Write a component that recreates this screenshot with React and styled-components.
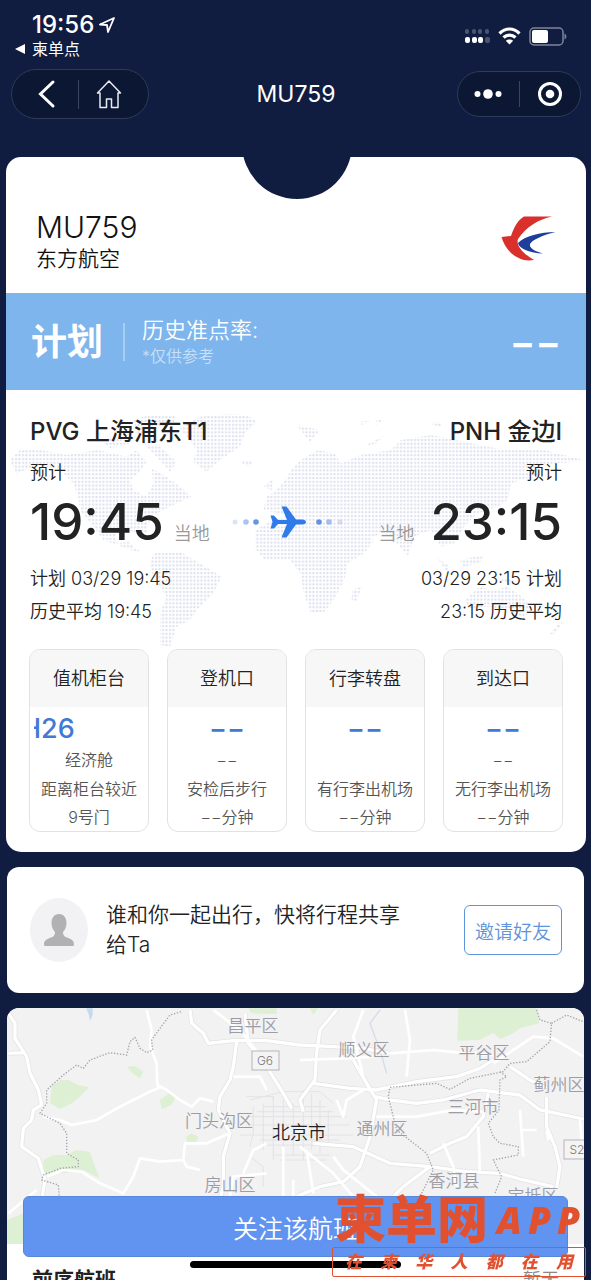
import React from 'react'
import styled, { createGlobalStyle } from 'styled-components'

const navy = '#111d40'
const blue = '#3f7ad6'

const GlobalStyle = createGlobalStyle`
  * {
    box-sizing: border-box;
  }

  body {
    margin: 0;
    background: ${navy};
    color: #222;
    font-family: Inter, "Noto Sans CJK SC", sans-serif;
    font-weight: 350;
  }

  h1, h2, h3, p {
    margin: 0;
    font-weight: inherit;
  }

  button {
    font-family: inherit;
    font-weight: inherit;
    cursor: pointer;
  }

  svg {
    display: block;
  }
`

const Screen = styled.div`
  height: 100vh;
  overflow: hidden auto;
  scrollbar-width: none;
  background: ${navy};
`

const StatusBar = styled.div`
  display: flex;
  justify-content: space-between;
  align-items: center;
  padding: 12px 24px 0 15px;
  color: #fff;
`

const Clock = styled.div`
  display: flex;
  align-items: center;
  gap: 5px;
  padding-left: 17px;
  font-size: 24px;
  font-weight: 500;
  line-height: 26px;
`

const BackToApp = styled.a`
  display: flex;
  align-items: center;
  gap: 7px;
  color: #fff;
  font-size: 16px;
  font-weight: 400;
  line-height: 22px;
  text-decoration: none;
`

const Indicators = styled.div`
  display: flex;
  align-items: center;
  gap: 8px;
`

const NavBar = styled.nav`
  display: grid;
  grid-template-columns: 1fr auto 1fr;
  align-items: center;
  padding: 9px 10px 0 11px;
  color: #fff;
`

const Title = styled.h1`
  font-size: 23px;
  font-weight: 400;
  line-height: 30px;
`

const Capsule = styled.div`
  display: flex;
  align-items: center;
  justify-self: ${props => props.$end ? 'end' : 'start'};
  width: ${props => props.$end ? '124px' : '138px'};
  height: ${props => props.$end ? '46px' : '50px'};
  padding: ${props => props.$end ? '0' : '0 8px 0 4px'};
  border: 1px solid #2f3a58;
  border-radius: 25px;
  background: #0c1733;
`

const CapsuleButton = styled.button`
  display: flex;
  flex: 1;
  align-items: center;
  justify-content: center;
  padding: 0;
  border: 0;
  background: none;

  & + & {
    border-left: 1px solid #3a4562;
  }
`

const FlightCard = styled.section`
  position: relative;
  margin: 38px 5px 0 6px;
  border-radius: 15px;
  background: #fff;
  overflow: hidden;
`

const Notch = styled.div`
  position: absolute;
  top: -68px;
  left: 50%;
  width: 110px;
  height: 110px;
  margin-left: -54px;
  border-radius: 50%;
  background: ${navy};
`

const FlightHeader = styled.header`
  display: flex;
  justify-content: space-between;
  align-items: flex-start;
  padding: 53px 30px 19px;
`

const FlightNumber = styled.h2`
  color: #111;
  font-size: 30px;
  line-height: 34px;
`

const Airline = styled.p`
  color: #111;
  font-size: 21px;
  line-height: 30px;
`

const StatusBand = styled.div`
  display: flex;
  align-items: center;
  height: 97px;
  padding: 0 25px;
  background: #7eb5ec;
  color: #fff;
`

const FlightStatus = styled.div`
  padding-right: 20px;
  font-size: 36px;
  font-weight: 700;
  line-height: 44px;
`

const Punctuality = styled.div`
  flex: 1;
  font-size: 22px;
  line-height: 28px;
`

const Divider = styled.div`
  width: 2px;
  height: 38px;
  margin-right: 17px;
  background: #a9cef3;
`

const Hint = styled.p`
  color: #c8e0f8;
  font-size: 16px;
  line-height: 24px;
`

const Rate = styled.div`
  font-size: 38px;
  font-weight: 600;
  line-height: 44px;
`

const FlightBody = styled.div`
  display: grid;

  > * {
    grid-area: 1 / 1;
    min-width: 0;
  }
`

const WorldMap = styled.svg`
  width: 100%;
  height: auto;
  padding-top: 10px;
`

const FlightDetails = styled.div`
  padding: 26px 23px 20px;
`

const Route = styled.div`
  display: flex;
  justify-content: space-between;
  align-items: center;
  padding: 0 1px;
`

const Endpoint = styled.div`
  text-align: ${props => props.$end ? 'right' : 'left'};
`

const Airport = styled.h3`
  font-size: 24px;
  font-weight: 500;
  line-height: 32px;
`

const Expected = styled.p`
  padding: 12px 0 6px;
  font-size: 18px;
  line-height: 26px;
`

const TimeRow = styled.div`
  display: flex;
  flex-direction: ${props => props.$end ? 'row-reverse' : 'row'};
  align-items: baseline;
  gap: ${props => props.$end ? '16px' : '10px'};
`

const Time = styled.span`
  font-size: 51px;
  font-weight: 500;
  line-height: 60px;
`

const Zone = styled.span`
  color: #999;
  font-size: 18px;
  line-height: 24px;
`

const Schedule = styled.div`
  padding-top: 10px;
  font-size: 18px;
  line-height: 33px;
`

const Places = styled.div`
  display: grid;
  grid-template-columns: repeat(4, 1fr);
  gap: 18px;
  padding-top: 21px;
`

const Place = styled.div`
  border: 1px solid #e2e2e2;
  border-radius: 11px;
  background: #fff;
  text-align: center;
  overflow: hidden;
`

const PlaceName = styled.h3`
  margin-bottom: 6px;
  background: #f7f7f7;
  font-size: 18px;
  line-height: 57px;
`

const PlaceValue = styled.div`
  display: flex;
  justify-content: ${props => props.$scrolling ? 'flex-start' : 'center'};
  margin: 0 4px;
  color: ${blue};
  font-size: 27px;
  font-weight: 500;
  line-height: 32px;
  overflow: hidden;
`

const Ticker = styled.span`
  margin-left: -13px;
`

const PlaceClass = styled.p`
  min-height: 30px;
  color: #555;
  font-size: 16px;
  line-height: 30px;
`

const PlaceNote = styled.p`
  color: #555;
  font-size: 16px;
  line-height: 28px;
  white-space: nowrap;
`

const ShareCard = styled.section`
  display: flex;
  align-items: center;
  height: 126px;
  margin: 15px 7px 0;
  padding: 0 22px 0 23px;
  border-radius: 12px;
  background: #fff;
`

const Avatar = styled.div`
  display: flex;
  flex: none;
  align-items: center;
  justify-content: center;
  width: 58px;
  height: 64px;
  margin-right: 18px;
  border-radius: 50%;
  background: #f2f2f5;
`

const ShareText = styled.p`
  flex: 1;
  padding-right: 52px;
  font-size: 21px;
  line-height: 30px;
`

const InviteButton = styled.button`
  flex: none;
  width: 98px;
  height: 50px;
  padding: 0;
  border: 1px solid #5f93da;
  border-radius: 6px;
  background: #fff;
  color: #5f93da;
  font-size: 19px;
`

const MapCard = styled.section`
  margin: 15px 7px 0;
  border-radius: 12px 12px 0 0;
  background: #fff;
  overflow: hidden;
`

const CityMap = styled.svg`
  width: 100%;
  height: auto;
  background: #f2f2f3;
`

const PreviousFlight = styled.div`
  display: flex;
  justify-content: space-between;
  padding: 21px 25px;
  font-size: 21px;
  line-height: 30px;
`

const PreviousTitle = styled.h3`
  font-size: 21px;
  font-weight: 700;
`

const PreviousValue = styled.span`
  color: #888;
  font-size: 18px;
`

const Dock = styled.div`
  position: fixed;
  right: 23px;
  bottom: 12px;
  left: 23px;
  display: flex;
  flex-direction: column;
  align-items: center;
  gap: 4px;
`

const FollowButton = styled.button`
  width: 100%;
  height: 61px;
  border: 1px solid #5787d8;
  border-radius: 6px;
  background: #6194f0;
  color: #fff;
  font-size: 25px;
`

const HomeIndicator = styled.div`
  width: 211px;
  height: 7px;
  border-radius: 4px;
  background: #000;
`

const Watermark = styled.div`
  position: fixed;
  right: 5px;
  bottom: 3px;
  width: 254px;
  color: #e2512f;
`

const Brand = styled.div`
  display: flex;
  align-items: center;
  justify-content: space-between;
  padding: 0 6px 0 3px;
  font-size: 51px;
  font-weight: 900;
  line-height: 54px;
`

const BrandSuffix = styled.span`
  display: flex;
  gap: 6px;
  font-family: "Open Sans", sans-serif;
  font-size: 37px;
  font-style: italic;
  font-weight: 800;
`

const Slogan = styled.div`
  display: flex;
  justify-content: space-between;
  padding: 0 12px;
  border: 1px solid #e2512f;
  border-radius: 2px;
  font-size: 17px;
  font-style: italic;
  font-weight: 900;
  line-height: 28px;
`

const places = [
  { name: '值机柜台', value: 'H26', scrolling: true, cabin: '经济舱', note: '距离柜台较近', detail: '9号门' },
  { name: '登机口', value: '−−', cabin: '−−', note: '安检后步行', detail: '−−分钟' },
  { name: '行李转盘', value: '−−', cabin: '', note: '有行李出机场', detail: '−−分钟' },
  { name: '到达口', value: '−−', cabin: '−−', note: '无行李出机场', detail: '−−分钟' }
]

const districts = [
  { name: '昌平区', x: 246, y: 24 },
  { name: '顺义区', x: 357, y: 48 },
  { name: '平谷区', x: 477, y: 51 },
  { name: '蓟州区', x: 552, y: 83 },
  { name: '三河市', x: 466, y: 105 },
  { name: '门头沟区', x: 212, y: 119 },
  { name: '通州区', x: 375, y: 127 },
  { name: '房山区', x: 223, y: 183 },
  { name: '香河县', x: 447, y: 179 },
  { name: '宝坻区', x: 526, y: 194 }
]

const continents = [
  // North America and its arctic islands
  'M30 180 60 150 110 148 200 165 290 150 380 170 410 150 440 185 420 215 390 240 400 270 440 290 460 250 455 205 500 230 540 260 575 290 530 310 490 330 460 345 440 380 440 400 400 395 345 390 350 430 385 425 425 460 380 445 310 420 280 380 240 330 235 290 220 250 180 210 110 195 50 222z',
  'M400 60 450 45 530 45 520 70 460 90 470 120 410 100zM300 120 350 110 390 130 330 145zM430 130 480 140 530 185 510 215 470 170z',
  // Greenland, Iceland
  'M540 85 600 50 680 42 740 45 770 65 735 100 720 140 660 180 620 215 580 185 590 150z',
  'M725 180 760 180 750 200 730 195z',
  // South America
  'M460 460 540 455 600 490 665 530 640 580 600 620 570 660 530 680 510 740 480 735 480 640 500 590 460 530 450 490z',
  // Eurasia
  'M873 210 903 180 953 150 1003 160 1023 190 1083 165 1173 150 1203 120 1293 105 1393 125 1513 150 1633 150 1758 182 1673 190 1613 200 1613 225 1533 250 1523 300 1493 320 1433 340 1393 380 1363 430 1323 440 1293 390 1243 410 1223 470 1183 420 1143 400 1093 425 1043 420 973 360 900 345 860 345 790 330 800 290 830 270 860 235z',
  // Africa
  'M765 390 800 370 873 340 960 360 1023 385 1060 400 1123 420 1093 460 1043 490 1033 540 1008 590 973 635 933 640 913 585 900 520 870 480 795 480 765 445z',
  'M790 260 820 235 815 270zM1058 570 1085 560 1070 605 1055 600z',
  // Oceania
  'M1395 600 1440 560 1480 572 1520 560 1560 585 1600 625 1570 655 1530 630 1470 620 1405 625z',
  'M1310 470 1350 500 1340 515zM1380 480 1450 465 1440 490 1390 500zM1480 530 1540 540 1530 555zM1650 700 1680 665 1690 670 1660 705z',
  'M890 75 960 90 930 125zM1080 65 1110 62 1085 75zM1130 60 1150 58 1130 75zM1090 140 1150 108 1130 130zM1290 70 1330 65 1320 82z'
]

const thickRoads = [
  'M25 40 45 70 45 115 80 170 90 220 115 270 125 315 100 330 95 360 70 385 65 440 115 475 135 540 125 600',
  'M25 160 75 158M570 30 575 70 610 100 625 130 700 122 800 122 900 135 1000 140 1090 145 1170 160M710 125 700 200 690 240 660 290 655 330 690 400 670 470 670 560 660 600',
  'M735 40 745 130 800 200 850 280 875 325M1010 30 960 90 950 160 945 240 900 300 910 335',
  'M940 250 1050 265 1130 270 1250 245 1370 230 1440 205 1480 180M1125 290 1170 300 1250 310 1330 300 1440 270 1560 285 1620 330 1755 358',
  'M1060 180 1100 250 1130 300 1110 410 1080 500 1030 545 960 560 890 590M940 430 1060 440 1170 490 1290 500 1400 515 1500 520 1570 540 1660 560M1290 500 1210 560 1180 590',
  'M1640 290 1640 380 1665 440 1680 500 1670 565M1290 460 1350 430 1400 410 1450 350 1465 280M1640 390 1645 420M1530 200 1590 240 1640 265'
]

const thinRoads = [
  'M440 30 455 90 450 140 470 190 472 255 500 270 540 300 575 320 600 295 640 305M130 350 180 360 215 375 290 360 360 320 400 300 450 275 480 262',
  'M245 515 300 550 370 580 400 530 420 475 480 485 550 480 560 500 600 510M550 480 555 430 620 430 690 400M245 515 190 510 140 530M25 640 110 570',
  'M640 30 720 90 790 180M1090 30 1060 110 1090 230M1215 30 1230 120 1220 230M1170 160 1300 150 1400 160 1480 165M1480 190 1600 110 1660 115 1750 170',
  'M1130 350 1250 350 1360 330 1450 335M1330 430 1360 500 1370 560M1435 380 1440 520M1560 330 1570 470M1560 390 1610 390M1740 360 1745 420M900 180 1040 175 1120 170M700 230 780 230 800 270',
  'M730 520 760 450 800 430M850 440 850 590M800 520 700 530 690 590M900 440 1000 520 1060 590M1000 470 1030 510 1130 590M880 540 880 590M920 450 940 580M1010 300 1030 350 1040 300 1090 270'
]

const streets = [
  'M750 300 850 275 960 275 1000 310M760 320 760 400 750 440M790 310 790 450M820 290 820 480M850 300 850 470M880 310 880 470M910 270 910 480M935 280 935 450M960 300 960 460M985 330 985 440',
  'M740 350 1040 350M750 375 1050 375M720 405 1060 405M770 335 1000 335M790 320 980 320M780 420 1020 420M800 435 1000 435M820 465 990 465M740 290 820 290 820 300M750 470 790 500 790 560M840 480 980 480'
]

const borders = [
  'M543 35 510 45 480 85 455 120 458 150 440 158 420 145 405 112 390 125 380 165 330 158 270 180 250 205 230 195 190 225 140 270 140 310 120 340 180 370 200 400 200 460 235 480 235 500 180 505 130 525 125 540 175 555 178 590',
  'M1610 30 1620 60 1655 70 1650 125 1580 185 1530 190 1510 215 1410 235 1350 268 1310 250 1170 262 1165 290 1180 350 1190 390 1280 460 1300 510 1265 580',
  'M1655 70 1700 45 1750 65M1500 215 1520 230 1500 240 1497 330 1465 370 1480 410 1500 430 1555 440 1555 465 1480 480 1505 530 1485 580'
]

const LocationArrow = () => (
  <svg width="16" height="16" viewBox="0 0 16 16" fill="none" stroke="#fff" strokeWidth="1.8" strokeLinejoin="round">
    <path d="M15 1 1 7.500l7 .5 1 7z" />
  </svg>
)

const SignalIcon = () => (
  <svg width="25" height="14" viewBox="0 0 25 14" fill="#fff">
    {[0, 7, 13, 20].map(x =>
      <rect key={x} x={x} y="0" width="4" height="5" rx="2" opacity="0.25" />
    )}
    {[0, 7, 13, 20].map(x =>
      <rect key={x} x={x} y="8" width="5" height="6" rx="2" opacity={x === 20 ? 0.25 : 1} />
    )}
  </svg>
)

const WifiIcon = () => (
  <svg width="23" height="18" viewBox="0 0 23 18" fill="none" stroke="#fff" strokeWidth="3.200">
    <path d="M1.500 6.500C7.500 0.500 15.500 0.500 21.500 6.500M5.500 10.500c3.500-3.300 8.500-3.300 12 0" />
    <path d="M11.500 17.500 7.800 13.800c2-1.900 5.400-1.900 7.400 0z" fill="#fff" stroke="none" />
  </svg>
)

const BatteryIcon = () => (
  <svg width="38" height="19" viewBox="0 0 38 19">
    <rect x="1" y="1" width="33" height="17" rx="4" fill="none" stroke="#7d859b" strokeWidth="1.500" />
    <rect x="3" y="3" width="16" height="13" rx="2" fill="#fff" />
    <path d="M35.500 6.500c2.500 1 2.500 5 0 6z" fill="#7d859b" />
  </svg>
)

const BackIcon = () => (
  <svg width="18" height="30" viewBox="0 0 18 30" fill="none" stroke="#fff" strokeWidth="3" strokeLinecap="round">
    <path d="M15 3 2.500 15 15 27" />
  </svg>
)

const HomeIcon = () => (
  <svg width="26" height="29" viewBox="0 0 26 29" fill="none" stroke="#e8eaf0" strokeWidth="1.500" strokeLinejoin="round">
    <path d="M13 1 1.500 13H4v14.500h6.500V19h5v8.500H22V13h2.500z" />
  </svg>
)

const MoreIcon = () => (
  <svg width="28" height="10" viewBox="0 0 28 10" fill="#fff">
    <circle cx="3.500" cy="5" r="3" />
    <circle cx="14" cy="5" r="4.800" />
    <circle cx="24.500" cy="5" r="3" />
  </svg>
)

const CloseIcon = () => (
  <svg width="26" height="26" viewBox="0 0 26 26" fill="none" stroke="#fff" strokeWidth="3">
    <circle cx="13" cy="13" r="10.500" />
    <circle cx="13" cy="13" r="4.300" fill="#fff" stroke="none" />
  </svg>
)

const AirlineLogo = () => (
  <svg width="56" height="56" viewBox="0 0 56 56">
    <path d="M24 6.500H52C39 9 26 17 18 29c-2 6 4 14 16 21-4 .6-7 .5-10 0C13 47 5 39 1.500 27L11 26C14 17 18 10 24 6.500z" fill="#d9302c" />
    <path d="M55.500 22C40 22 25 26 18 33c1 6 12 10 25 10.500C34 41 29 38 30 34c2-4 13-9 25.500-12z" fill="#1d3f9b" />
  </svg>
)

const FlightPath = () => (
  <svg width="124" height="36" viewBox="0 0 124 36">
    <g fill={blue}>
      <circle cx="3" cy="18" r="2.500" opacity="0.2" />
      <circle cx="14" cy="18" r="2.800" opacity="0.45" />
      <circle cx="24" cy="18" r="2.800" opacity="0.8" />
      <circle cx="87" cy="18" r="2.800" opacity="0.8" />
      <circle cx="97" cy="18" r="2.800" opacity="0.45" />
      <circle cx="108" cy="18" r="2.500" opacity="0.2" />
    </g>
    <path
      d="M38.500 11.500h3.500l4 4.500h9L49.500 2.500h5L64 15.500h6c3 0 4 1.500 4 2.500s-1 2.500-4 2.500h-6L54.500 33.500h-5L55 20h-9l-4 4.500h-3.500l2-6.500z"
      fill="#2f7bea"
    />
  </svg>
)

const PersonIcon = () => (
  <svg width="30" height="34" viewBox="0 0 30 34" fill="#b1b1b3">
    <path d="M15 1c5 0 7.500 4 7.500 9 0 4-1.500 7-3.500 9 0 3 1 4.500 4 5.500 4 1.500 7 3 7 6.500 0 1.500-.500 2-1.500 2h-27C.500 33 0 32.500 0 31c0-3.500 3-5 7-6.500 3-1 4-2.500 4-5.500-2-2-3.500-5-3.500-9 0-5 2.500-9 7.500-9z" />
  </svg>
)

const World = () => (
  <WorldMap viewBox="6 0 580 250" aria-hidden="true">
    <defs>
      <pattern id="dots" width="3.500" height="3.800" patternUnits="userSpaceOnUse">
        <rect x="1" y="1" width="2" height="2" rx="0.500" fill="#dcdfee" />
      </pattern>
      <clipPath id="land">
        {continents.map(d =>
          <path key={d} d={d} transform="scale(0.3333)" />
        )}
      </clipPath>
    </defs>
    <rect x="0" y="0" width="591" height="250" fill="url(#dots)" clipPath="url(#land)" />
  </WorldMap>
)

const RoadSign = ({ x, y, width, children }) => (
  <g>
    <rect x={x} y={y} width={width} height="19" fill="#f4f4f4" stroke="#b5b5b8" />
    <text x={x + 13} y={y + 14} textAnchor="middle" fontSize="12" fill="#77777a">{children}</text>
  </g>
)

const Beijing = () => (
  <CityMap viewBox="0 0 577 236">
    <g transform="translate(-7 -8) scale(0.3333)" fill="none" strokeLinejoin="round">
      <g fill="#def0d4">
        <path d="M155 260 180 240 205 240 235 255 268 262 240 290 215 310 180 328 150 310z" />
        <path d="M130 480 160 465 205 465 225 450 270 455 285 500 298 535 250 510 190 520 130 520z" />
        <path d="M380 200 405 198 430 215 420 235 400 222zM480 300 510 278 528 288 515 315 485 328zM558 410 575 400 595 410 590 425 562 430z" />
        <path d="M20 660 70 640V740H20zM745 25H830V42L755 40zM930 25H955L940 45z" />
        <path d="M1375 25H1610L1618 70 1560 85 1540 100 1500 118 1480 98 1440 120 1372 122z" />
      </g>
      <path d="M258 25h20v20l-8 18-4-20z" fill="#c7d9ef" />
      <path d="M1140 30 1110 70 1125 110 1140 150 1160 220" stroke="#d5dbe8" strokeWidth="4" />
      {streets.map(d => <path key={d} d={d} stroke="#e3e3e5" strokeWidth="3" />)}
      {thickRoads.map(d => <path key={d} d={d} stroke="#e2e2e4" strokeWidth="14" />)}
      {thinRoads.map(d => <path key={d} d={d} stroke="#fff" strokeWidth="8" />)}
      {thickRoads.map(d => <path key={d} d={d} stroke="#fff" strokeWidth="10" />)}
      {borders.map(d => <path key={d} d={d} stroke="#a3a3ab" strokeWidth="4" strokeDasharray="4 5" />)}
    </g>
    <RoadSign x={245} y={43} width={27}>G6</RoadSign>
    <RoadSign x={557} y={132} width={30}>S2</RoadSign>
    <g textAnchor="middle" fontSize="17" fill="#9c9ca4">
      {districts.map(({ name, x, y }) =>
        <text key={name} x={x} y={y}>{name}</text>
      )}
    </g>
    <text x="292" y="131" textAnchor="middle" fontSize="18" fill="#222">北京市</text>
  </CityMap>
)

const App = () => (
  <Screen>
    <GlobalStyle />
    <StatusBar>
      <div>
        <Clock>19:56 <LocationArrow /></Clock>
        <BackToApp href="#back">
          <svg width="10" height="10" viewBox="0 0 10 10" fill="#fff"><path d="M0 5 10 0v10z" /></svg>
          柬单点
        </BackToApp>
      </div>
      <Indicators>
        <SignalIcon />
        <WifiIcon />
        <BatteryIcon />
      </Indicators>
    </StatusBar>

    <NavBar>
      <Capsule>
        <CapsuleButton aria-label="返回"><BackIcon /></CapsuleButton>
        <CapsuleButton aria-label="首页"><HomeIcon /></CapsuleButton>
      </Capsule>
      <Title>MU759</Title>
      <Capsule $end>
        <CapsuleButton aria-label="更多"><MoreIcon /></CapsuleButton>
        <CapsuleButton aria-label="关闭"><CloseIcon /></CapsuleButton>
      </Capsule>
    </NavBar>

    <FlightCard>
      <Notch />
      <FlightHeader>
        <div>
          <FlightNumber>MU759</FlightNumber>
          <Airline>东方航空</Airline>
        </div>
        <AirlineLogo />
      </FlightHeader>
      <StatusBand>
        <FlightStatus>计划</FlightStatus>
        <Divider />
        <Punctuality>
          历史准点率:
          <Hint>*仅供参考</Hint>
        </Punctuality>
        <Rate>−−</Rate>
      </StatusBand>
      <FlightBody>
        <World />
        <FlightDetails>
          <Route>
            <Endpoint>
              <Airport>PVG 上海浦东T1</Airport>
              <Expected>预计</Expected>
              <TimeRow>
                <Time>19:45</Time>
                <Zone>当地</Zone>
              </TimeRow>
              <Schedule>
                <p>计划 03/29 19:45</p>
                <p>历史平均 19:45</p>
              </Schedule>
            </Endpoint>
            <FlightPath />
            <Endpoint $end>
              <Airport>PNH 金边I</Airport>
              <Expected>预计</Expected>
              <TimeRow $end>
                <Time>23:15</Time>
                <Zone>当地</Zone>
              </TimeRow>
              <Schedule>
                <p>03/29 23:15 计划</p>
                <p>23:15 历史平均</p>
              </Schedule>
            </Endpoint>
          </Route>
          <Places>
            {places.map(place =>
              <Place key={place.name}>
                <PlaceName>{place.name}</PlaceName>
                <PlaceValue $scrolling={place.scrolling}>
                  {place.scrolling ? <Ticker>{place.value}</Ticker> : place.value}
                </PlaceValue>
                <PlaceClass>{place.cabin}</PlaceClass>
                <PlaceNote>{place.note}</PlaceNote>
                <PlaceNote>{place.detail}</PlaceNote>
              </Place>
            )}
          </Places>
        </FlightDetails>
      </FlightBody>
    </FlightCard>

    <ShareCard>
      <Avatar><PersonIcon /></Avatar>
      <ShareText>谁和你一起出行，快将行程共享给Ta</ShareText>
      <InviteButton>邀请好友</InviteButton>
    </ShareCard>

    <MapCard>
      <Beijing />
      <PreviousFlight>
        <PreviousTitle>前序航班</PreviousTitle>
        <PreviousValue>暂无</PreviousValue>
      </PreviousFlight>
    </MapCard>

    <Dock>
      <FollowButton>关注该航班</FollowButton>
      <HomeIndicator />
    </Dock>

    <Watermark>
      <Brand>
        柬单网
        <BrandSuffix>
          <span>A</span>
          <span>P</span>
          <span>P</span>
        </BrandSuffix>
      </Brand>
      <Slogan>
        {[...'在柬华人都在用'].map((char, index) =>
          <span key={index}>{char}</span>
        )}
      </Slogan>
    </Watermark>
  </Screen>
)

export default App
